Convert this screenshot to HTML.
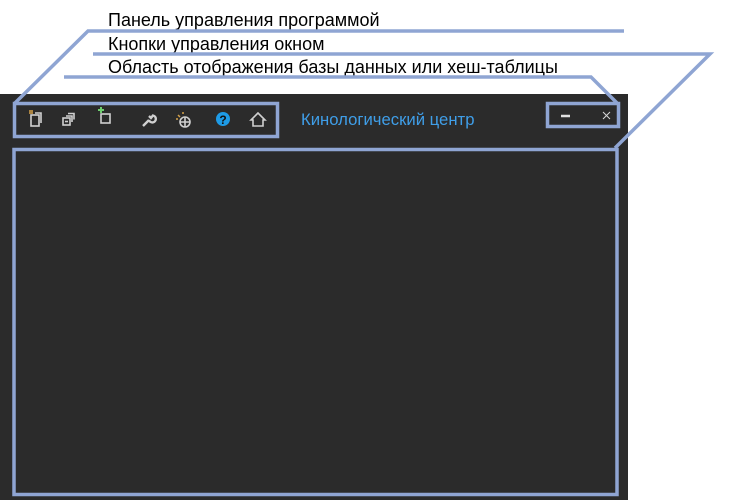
<!DOCTYPE html>
<html><head><meta charset="utf-8"><style>
body{margin:0;width:750px;height:500px;background:#fff;position:relative;overflow:hidden;font-family:"Liberation Sans",Arial,sans-serif}
.dark{position:absolute;left:0;top:94px;width:628px;height:406px;background:#2b2b2b}
.t{position:absolute;left:108px;font-size:18px;color:#000;white-space:nowrap;line-height:20px}
.title{position:absolute;left:301px;top:110px;font-size:16.7px;color:#3f9ee8;white-space:nowrap}
svg{position:absolute;left:0;top:0}
</style></head><body>
<div class="dark"></div>
<div class="t" style="top:10px">Панель управления программой</div>
<div class="t" style="top:34px">Кнопки управления окном</div>
<div class="t" style="top:57px">Область отображения базы данных или хеш-таблицы</div>
<div class="title">Кинологический центр</div>
<svg width="750" height="500">
<g fill="none" stroke="#8fa5d3" stroke-width="3.5">
<rect x="14.5" y="103.5" width="263" height="33"/>
<rect x="547.5" y="103.5" width="71" height="23"/>
<rect x="14" y="149.5" width="603" height="345"/>
<polyline points="15,103 88,31 624,31"/>
<polyline points="93,54 710,54 615,148"/>
<polyline points="64,77 591,77 617,103"/>
</g>
<g stroke="#d0d0d0" fill="none" stroke-width="1.6">
<rect x="31" y="115" width="8" height="11"/><path d="M35 113h6v10"/>
<rect x="63" y="118" width="7" height="7"/><path d="M66 116h6v6M68 113.5h6v6"/><path d="M65 121.5h3"/>
<rect x="101" y="114" width="9" height="9"/>
<path d="M258 113l-7 7h2v6h10v-6h2z"/>
<circle cx="185" cy="122" r="5"/><path d="M180 122h10M185 117v10"/>
</g>
<path d="M143 126l6-6M149 120a3.5 3.5 0 1 0 4-4.5l-2 2.5-2-2" stroke="#d0d0d0" stroke-width="2.4" fill="none"/>
<path d="M98 110h6M101 107v6" stroke="#6fcf6f" stroke-width="2"/>
<path d="M29 111h4M29 113h4M178 115l2 2M183 112v2M176 119h2" stroke="#d6a24a" stroke-width="1.5"/>
<circle cx="223" cy="119" r="7" fill="#1e9be6"/>
<text x="223" y="124" font-size="12" font-weight="bold" fill="#111" text-anchor="middle" font-family="Liberation Sans">?</text>
<path d="M561 116h9" stroke="#e0e0e0" stroke-width="2.5"/>
<path d="M603 112l7 7M610 112l-7 7" stroke="#d8d8d8" stroke-width="1"/>
</svg>
</body></html>
